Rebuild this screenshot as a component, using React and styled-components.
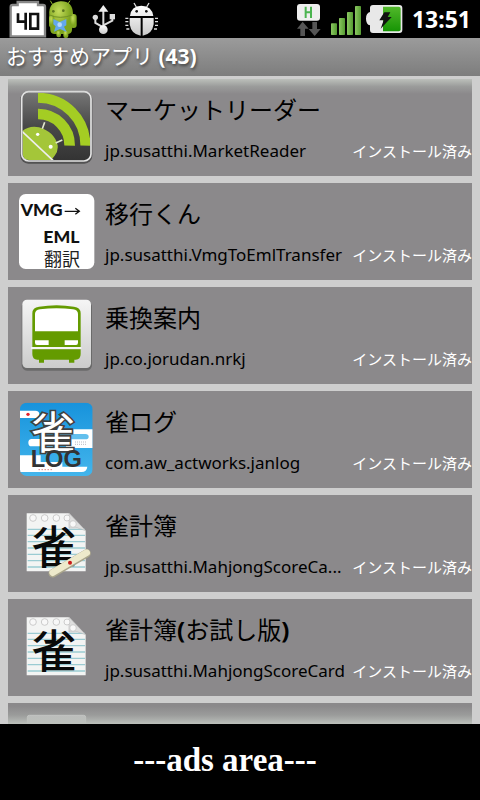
import React from 'react'
import styled, { createGlobalStyle } from 'styled-components'

const GlobalStyle = createGlobalStyle`
  * {
    box-sizing: border-box;
  }

  body {
    margin: 0;
    background: #000;
    font-family: 'Noto Sans', 'Noto Sans CJK JP', sans-serif;
  }
`

const Screen = styled.div`
  display: flex;
  flex-direction: column;
  height: 100vh;
`

const StatusBar = styled.div`
  display: flex;
  justify-content: space-between;
  height: 38px;
  background: #000;
`

const StatusGroup = styled.div`
  display: flex;
  align-items: center;
`

const Clock = styled.time`
  padding: 0 9px 0 8px;
  color: #fff;
  font-size: 23px;
  font-weight: 700;
  line-height: 38px;
`

const TitleBar = styled.h1`
  margin: 0;
  padding: 0 6px;
  height: 38px;
  background: linear-gradient(#9b9b9b, #7d7d7d);
  color: #fff;
  font-size: 21px;
  font-weight: 400;
  line-height: 36px;
  text-shadow: 1px 2px 3px #444;
`

const ListArea = styled.main`
  position: relative;
  flex: 1;
  min-height: 0;
  overflow: hidden;
  padding: 3px 8px 0;
  background: #cecece;
`

const Fade = styled.div`
  position: absolute;
  left: 8px;
  right: 8px;
  ${(p) => (p.$bottom ? 'bottom: 0' : 'top: 3px')};
  height: ${(p) => (p.$bottom ? '18px' : '15px')};
  background: linear-gradient(
    ${(p) => (p.$bottom ? 'to top' : 'to bottom')},
    rgba(188, 192, 187, 1),
    rgba(165, 168, 165, 0.6) 50%,
    rgba(140, 138, 140, 0)
  );
`

const AppList = styled.ul`
  display: flex;
  flex-direction: column;
  gap: 7px;
  margin: 0;
  padding: 0;
  list-style: none;
`

const Card = styled.li`
  display: flex;
  flex-shrink: 0;
  align-items: flex-start;
  gap: 9px;
  height: 97px;
  padding: 8px 0 0 8px;
  background: #8b898b;
`

const Icon = styled.svg`
  display: block;
  flex-shrink: 0;
  width: 80px;
  height: 80px;
  overflow: visible;
`

const Info = styled.div`
  flex: 1;
  min-width: 0;
`

const AppName = styled.h2`
  margin: 0;
  color: #000;
  font-size: 24px;
  font-weight: 400;
  line-height: 46px;
`

const Detail = styled.div`
  display: flex;
  align-items: center;
  line-height: 36px;
`

const PackageName = styled.span`
  flex: 1;
  min-width: 0;
  color: #000;
  font-size: 17px;
  white-space: nowrap;
`

const Installed = styled.span`
  color: #fff;
  font-size: 15px;
  white-space: nowrap;
`

const AdsArea = styled.footer`
  height: 76px;
  padding-right: 30px;
  background: #000;
  color: #fff;
  font-family: 'Liberation Serif', serif;
  font-size: 33px;
  font-weight: 700;
  line-height: 72px;
  text-align: center;
`

const StatusLeft = () => (
  <svg width="160" height="38" viewBox="0 0 480 114" aria-hidden="true">
    <defs>
      <radialGradient id="droid" cx="40%" cy="30%">
        <stop offset="0" stopColor="#c4dc5c" />
        <stop offset="1" stopColor="#7fa51f" />
      </radialGradient>
      <linearGradient id="silver" x2="0" y2="1">
        <stop offset="0" stopColor="#fff" />
        <stop offset="1" stopColor="#c9c9c9" />
      </linearGradient>
    </defs>
    <path d="M53 6h61v9h15q6 0 6 6v88H32V21q0-6 6-6h15z" fill="#fff" stroke="#888" strokeWidth="7" />
    <path d="M54 40v25h25M77 38v51M91 42h23v44H91z" fill="none" stroke="#111" strokeWidth="8" />
    <g fill="url(#droid)">
      <path d="M148 44Q145 7 181 4q36-2 38 36l-3 50q-1 12-14 12h-38q-12 0-13-12z" />
      <rect x="211" y="42" width="19" height="42" rx="9" />
      <rect x="147" y="46" width="16" height="36" rx="8" />
      <rect x="169" y="92" width="14" height="20" rx="7" />
      <rect x="190" y="92" width="15" height="22" rx="7" />
      <path d="M158 14l-7-12M202 14l8-12" stroke="#91b52d" strokeWidth="3" />
    </g>
    <path d="M149 45q30 14 68 0" fill="none" stroke="#719225" strokeWidth="3" />
    <circle cx="160" cy="34" r="4" fill="#5b761f" />
    <circle cx="190" cy="32" r="4" fill="#5b761f" />
    <path d="M160 57l19 9 20-9v19l-7 4 8 16-20-9-18 8 5-16-7-6z" fill="#63a8ed" />
    <circle cx="179" cy="74" r="7" fill="#b5d8ff" />
    <g fill="none" stroke="#ddd" strokeWidth="6">
      <path d="M310 88V32M310 82l-24-13V53M310 76l27-14V50" />
    </g>
    <path d="M310 15l15 20h-30z" fill="#eee" />
    <circle cx="310" cy="89" r="13" fill="url(#silver)" />
    <circle cx="286" cy="52" r="8" fill="#ddd" />
    <path d="M329 42h16v16h-16z" fill="#ddd" />
    <path d="M390 48Q393 18 424 17q32 1 36 31zM389 54h33v53q-28-3-33-34zM428 54h33v19q-5 31-33 34z" fill="url(#silver)" />
    <path d="M409 21l-7-12M440 21l7-12" stroke="#ddd" strokeWidth="4" />
    <circle cx="410" cy="34" r="4" fill="#111" />
    <circle cx="439" cy="34" r="4" fill="#111" />
    <path
      d="M376 55h9M376 65h9M376 76h9M379 87h9M465 55h9M465 65h9M465 76h9M462 87h9"
      stroke="#ddd"
      strokeWidth="4"
    />
  </svg>
)

const StatusRight = () => (
  <svg width="109" height="38" viewBox="165 0 327 114" aria-hidden="true">
    <defs>
      <linearGradient id="bars" x2="1">
        <stop offset="0" stopColor="#8bc861" />
        <stop offset="1" stopColor="#559b31" />
      </linearGradient>
      <linearGradient id="charge" x2="0" y2="1">
        <stop offset="0" stopColor="#52b82b" />
        <stop offset="1" stopColor="#169404" />
      </linearGradient>
    </defs>
    <rect x="171" y="12" width="69" height="50" rx="9" fill="#eee" />
    <path d="M197 20v34M213 20v34M197 37h16" stroke="#4bb450" strokeWidth="6" />
    <path d="M188 65l18 21h-11v22h-14V86h-10zM224 108l-18-21h11V66h14v21h11z" fill="#555" />
    <g fill="url(#bars)">
      <rect x="273" y="70" width="18" height="35" rx="2" />
      <rect x="297" y="54" width="18" height="51" rx="2" />
      <rect x="321" y="36" width="18" height="69" rx="2" />
      <rect x="345" y="18" width="18" height="87" rx="2" />
    </g>
    <path
      d="M399 15h79q9 0 9 9v66q0 9-9 9h-79q-9 0-9-9V76q-12-3-12-20t12-20V24q0-9 9-9z"
      fill="#e8e8e8"
    />
    <path d="M429 20h47q6 0 6 6v62q0 6-6 6h-47z" fill="url(#charge)" />
    <path d="M433 37h18l-8 14h12l-33 35 9-25h-13z" fill="#111" />
  </svg>
)

const MarketReaderIcon = () => (
  <Icon viewBox="48 33 240 240" aria-hidden="true">
    <defs>
      <clipPath id="reader">
        <rect x="68" y="50" width="202" height="202" rx="18" />
      </clipPath>
      <linearGradient id="readerBg" x2="0" y2="1">
        <stop offset="0" stopColor="#777" />
        <stop offset="0.5" stopColor="#484848" />
        <stop offset="1" stopColor="#333" />
      </linearGradient>
    </defs>
    <rect x="61" y="47" width="216" height="216" rx="24" fill="#444" opacity="0.8" />
    <rect x="64" y="46" width="210" height="210" rx="22" fill="url(#readerBg)" />
    <g clipPath="url(#reader)">
      <g fill="none" stroke="#a4cd23">
        <path d="M114 65a142 142 0 0 1 142 144" strokeWidth="30" />
        <path d="M114 114a94 94 0 0 1 95 95" strokeWidth="32" />
      </g>
      <path
        d="M66 166Q87 148 117 154Q164 168 173 208Q175 226 164 239L140 270H66z"
        fill="#a4c639"
      />
      <path d="M66 166l98 92" stroke="#eee" strokeWidth="5" />
      <path d="M127 158l7-19M167 201l20-9" stroke="#e2e8cf" strokeWidth="5" />
      <circle cx="113" cy="175" r="5" fill="#fff" />
      <circle cx="152" cy="212" r="6" fill="#fff" />
    </g>
    <rect x="65" y="47" width="208" height="208" rx="21" fill="none" stroke="#e5e5e5" strokeWidth="5" />
  </Icon>
)

const VmgIcon = () => (
  <Icon viewBox="48 33 240 240" aria-hidden="true">
    <rect x="57" y="42" width="226" height="225" rx="20" fill="#fff" />
    <g fill="#111" fontFamily="Lato, sans-serif" fontSize="53" fontWeight="900">
      <text x="62" y="108">VMG</text>
      <text x="130" y="189">EML</text>
    </g>
    <path d="M194 94h42M226 85l12 9-12 9" fill="none" stroke="#111" strokeWidth="4" />
    <text x="132" y="257" fill="#222" fontFamily="'Noto Sans CJK JP', sans-serif" fontSize="54">
      翻訳
    </text>
  </Icon>
)

const TrainIcon = () => (
  <Icon viewBox="48 33 240 240" aria-hidden="true">
    <defs>
      <linearGradient id="trainBg" x2="0" y2="1">
        <stop offset="0" stopColor="#f5f5f5" />
        <stop offset="1" stopColor="#ccc" />
      </linearGradient>
    </defs>
    <rect x="65" y="52" width="211" height="208" rx="16" fill="#555" opacity="0.6" />
    <rect x="67" y="47" width="206" height="205" rx="14" fill="url(#trainBg)" />
    <path
      d="M97 189V88q0-18 20-20 53-9 105 0 20 2 20 20v101z"
      fill="#649b00"
    />
    <path d="M105 142V90q0-12 15-14 50-7 99 0 15 2 15 14v52z" fill="#fff" />
    <path d="M105 169h41v14h-35q-6 0-6-7zM194 169h40v7q0 7-6 7h-34z" fill="#fff" />
    <path d="M97 196h145v14q0 17-15 17h-4v9h-16v-9h-75v9h-15v-9h-5q-15 0-15-17z" fill="#649b00" />
    <path d="M93 192h151" stroke="#fff" strokeWidth="5" />
  </Icon>
)

const JanLogIcon = () => (
  <Icon viewBox="48 33 240 240" aria-hidden="true">
    <defs>
      <clipPath id="janlog">
        <rect x="60" y="44" width="218" height="220" rx="20" />
      </clipPath>
      <linearGradient id="sky" x2="0" y2="1">
        <stop offset="0" stopColor="#1793dc" />
        <stop offset="1" stopColor="#43b5ec" />
      </linearGradient>
    </defs>
    <g clipPath="url(#janlog)">
      <rect x="60" y="44" width="218" height="220" fill="url(#sky)" />
      <path
        d="M60 68h46q12 0 12 11t-12 11H60zM172 124h106v56h-72q-9 0-9-10t9-10h-35zM95 153h82v22H95q-10 0-10-11t10-11zM60 202h62v20h65v14h75q-2 16-17 16H60z"
        fill="#fff"
      />
      <path d="M180 138h76q10 0 10 8t-10 8h-78z" fill="#62bfed" />
      <path d="M226 162h36M226 169h36" stroke="#667" strokeWidth="2" strokeDasharray="2 4" />
      <path d="M116 245h40" stroke="#c34b4b" strokeWidth="3" strokeDasharray="3 6" />
    </g>
    <circle cx="84" cy="79" r="5" fill="#e31f2b" />
    <text
      x="92"
      y="184"
      fill="#fff"
      stroke="#414141"
      strokeWidth="10"
      paintOrder="stroke"
      fontFamily="'Noto Sans CJK JP', sans-serif"
      fontSize="134"
      fontWeight="400"
    >
      雀
    </text>
    <text
      x="92"
      y="238"
      fill="#333"
      fontFamily="'Liberation Sans', sans-serif"
      fontSize="71"
      fontWeight="700"
    >
      LOG
    </text>
  </Icon>
)

const ScoreIcon = ({ stick }) => (
  <Icon viewBox="48 33 240 240" aria-hidden="true">
    <path d="M80 64h127l50 52v122H80z" fill="#f3f4f3" />
    <path
      d="M83 112h172M83 130h172M83 149h172M83 168h172M83 187h172M83 206h172M83 225h172"
      stroke="#9bcbd2"
      strokeWidth="4"
    />
    <path d="M207 64v44q24-5 50 8z" fill="#dedede" stroke="#bbb" strokeWidth="2" />
    <g fill="#f8f8f8" stroke="#ccc" strokeWidth="3">
      <circle cx="99" cy="78" r="10" />
      <circle cx="134" cy="78" r="10" />
      <circle cx="169" cy="78" r="10" />
      <circle cx="201" cy="78" r="9" />
      <circle cx="219" cy="96" r="10" />
    </g>
    <text
      x="94"
      y="216"
      fill="#0a0a0a"
      fontFamily="'Noto Sans CJK JP', sans-serif"
      fontSize="136"
      fontWeight="500"
    >
      雀
    </text>
    {stick && (
      <g>
        <path d="M158 244l102-60" stroke="#aaa68c" strokeWidth="25" strokeLinecap="round" />
        <path d="M158 242l102-60" stroke="#ede9cb" strokeWidth="20" strokeLinecap="round" />
        <circle cx="210" cy="212" r="6" fill="#c71919" />
      </g>
    )}
  </Icon>
)

const BlankIcon = () => (
  <Icon viewBox="48 33 240 240" aria-hidden="true">
    <rect x="78" y="44" width="182" height="190" rx="8" fill="#888" />
    <rect x="82" y="46" width="175" height="182" rx="6" fill="#ddd" stroke="#eee" strokeWidth="3" />
  </Icon>
)

const apps = [
  { name: 'マーケットリーダー', pkg: 'jp.susatthi.MarketReader', icon: <MarketReaderIcon /> },
  { name: '移行くん', pkg: 'jp.susatthi.VmgToEmlTransfer', icon: <VmgIcon /> },
  { name: '乗換案内', pkg: 'jp.co.jorudan.nrkj', icon: <TrainIcon /> },
  { name: '雀ログ', pkg: 'com.aw_actworks.janlog', icon: <JanLogIcon /> },
  { name: '雀計簿', pkg: 'jp.susatthi.MahjongScoreCa...', icon: <ScoreIcon stick /> },
  {
    name: (
      <>
        雀計簿<b>(</b>お試し版<b>)</b>
      </>
    ),
    pkg: 'jp.susatthi.MahjongScoreCard',
    icon: <ScoreIcon />,
  },
]

const App = () => {
  return (
    <Screen>
      <GlobalStyle />
      <StatusBar>
        <StatusGroup>
          <StatusLeft />
        </StatusGroup>
        <StatusGroup>
          <StatusRight />
          <Clock>13:51</Clock>
        </StatusGroup>
      </StatusBar>
      <TitleBar>
        おすすめアプリ <b>(43)</b>
      </TitleBar>
      <ListArea>
        <AppList>
          {apps.map((app) => (
            <Card key={app.pkg}>
              {app.icon}
              <Info>
                <AppName>{app.name}</AppName>
                <Detail>
                  <PackageName>{app.pkg}</PackageName>
                  <Installed>インストール済み</Installed>
                </Detail>
              </Info>
            </Card>
          ))}
          <Card>
            <BlankIcon />
          </Card>
        </AppList>
        <Fade />
        <Fade $bottom />
      </ListArea>
      <AdsArea>---ads area---</AdsArea>
    </Screen>
  )
}

export default App
